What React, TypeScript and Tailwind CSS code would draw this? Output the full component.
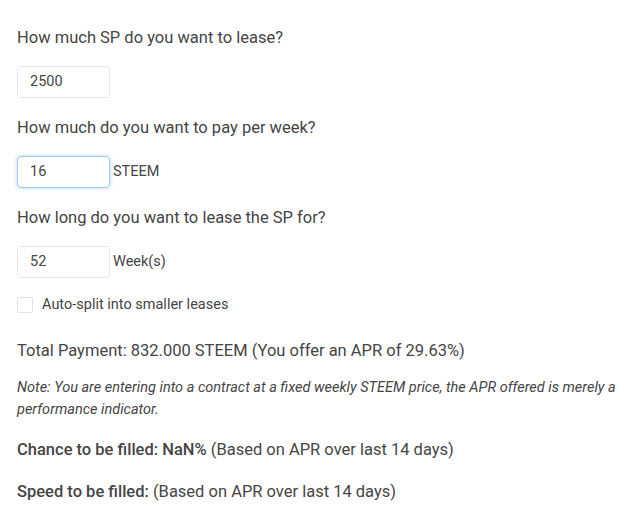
import React from "react";

export default function App() {
  return (
    <div
      className="w-[640px] h-[532px] bg-white text-[#454545] px-[17px] pt-[26px]"
      style={{ fontFamily: "Roboto, 'Liberation Sans', sans-serif" }}
    >
      <div className="text-[16.5px] leading-[24px]">How much SP do you want to lease?</div>
      <div className="mt-[16px] flex items-center h-[32px]">
        <div className="w-[93px] h-[32px] border border-[#e6e6e6] rounded-[4px] flex items-center pl-[12px] text-[14.5px]">2500</div>
      </div>
      <div className="mt-[18px] text-[16.5px] leading-[24px]">How much do you want to pay per week?</div>
      <div className="mt-[16px] flex items-center h-[32px]">
        <div className="w-[93px] h-[32px] border border-[#9ecaed] shadow-[0_0_4px_#b8d8f2] rounded-[4px] flex items-center pl-[12px] text-[14.5px]">16</div>
        <span className="ml-[3px] text-[14.5px]">STEEM</span>
      </div>
      <div className="mt-[18px] text-[16.5px] leading-[24px]">How long do you want to lease the SP for?</div>
      <div className="mt-[16px] flex items-center h-[32px]">
        <div className="w-[93px] h-[32px] border border-[#e6e6e6] rounded-[4px] flex items-center pl-[12px] text-[14.5px]">52</div>
        <span className="ml-[3px] text-[14.5px]">Week(s)</span>
      </div>
      <div className="mt-[19px] flex items-center h-[16px]">
        <div className="w-[16px] h-[16px] border border-[#e3e3e3] rounded-[2px]" />
        <span className="ml-[9px] text-[14.5px]">Auto-split into smaller leases</span>
      </div>
      <div className="mt-[26px] text-[16.5px] leading-[24px]">
        Total Payment: 832.000 STEEM (You offer an APR of 29.63%)
      </div>
      <div className="mt-[14px] text-[14.5px] leading-[22px] italic">
        Note: You are entering into a contract at a fixed weekly STEEM price, the APR offered is merely a performance indicator.
      </div>
      <div className="mt-[17px] text-[16.5px] leading-[24px]">
        <span className="font-medium">Chance to be filled: NaN%</span> (Based on APR over last 14 days)
      </div>
      <div className="mt-[18px] text-[16.5px] leading-[24px]">
        <span className="font-medium">Speed to be filled:</span> (Based on APR over last 14 days)
      </div>
    </div>
  );
}
